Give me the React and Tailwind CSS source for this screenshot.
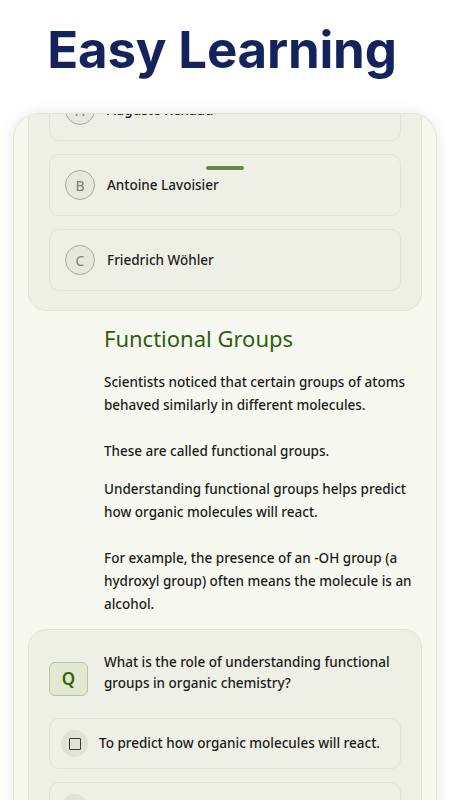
import React from "react";

const body = { fontFamily: '"Noto Sans", "Open Sans", sans-serif' };

function OptionRow({ letter, text }) {
  return (
    <div className="flex h-[62px] items-center rounded-[10px] border border-[#e2e3d6] bg-[#eff0e5] pl-[15px]">
      <div className="flex h-[30px] w-[30px] items-center justify-center rounded-full border-[1.5px] border-[#a9aa9f] bg-[#e7e8dd] text-[14px] text-[#7c7c74]">
        {letter}
      </div>
      <span className="ml-[12px] text-[13.5px] font-medium text-[#1c1c1a]">{text}</span>
    </div>
  );
}

function AnswerRow({ text }) {
  return (
    <div className="flex h-[51px] items-center rounded-[10px] border border-[#e2e3d6] bg-[#eff0e5] pl-[11px]">
      <div className="flex h-[27px] w-[27px] items-center justify-center rounded-full bg-[#e2e3d8]">
        <div className="h-[12px] w-[12px] rounded-[1px] border-[1.5px] border-[#3a3a38]" />
      </div>
      <span className="ml-[11px] text-[13.5px] font-medium text-[#1c1c1a]">{text}</span>
    </div>
  );
}

export default function App() {
  return (
    <div className="h-[800px] w-[450px] overflow-hidden bg-white" style={body}>
      <h1
        className="pr-[6px] pt-[24px] text-center text-[51px] font-bold leading-[52px] tracking-[-0.2px] text-[#14235b]"
        style={{ fontFamily: "Inter, sans-serif" }}
      >
        Easy Learning
      </h1>
      <div className="relative mx-[13px] mt-[37px] h-[720px] overflow-hidden rounded-t-[26px] border border-[#e3e9d1] bg-[#f7f8f0] shadow-[0_0_14px_rgba(0,0,0,0.10)]">
        <div className="mt-[-55px] px-[14px]">
          <div className="flex flex-col gap-[13px] rounded-[18px] border border-[#e1e3d4] bg-[#eff0e5] px-[20px] pb-[19px] pt-[19px]">
            <OptionRow letter="A" text="Auguste Renaud" />
            <OptionRow letter="B" text="Antoine Lavoisier" />
            <OptionRow letter="C" text="Friedrich Wöhler" />
          </div>

          <div className="ml-[76px] mr-[8px] mt-[12px]">
            <h2 className="text-[22px] leading-[30px] text-[#2f5e12]">Functional Groups</h2>
            <p className="mt-[18px] whitespace-pre-line text-[13.5px] font-medium leading-[23px] text-[#1c1c1a]">
              {"Scientists noticed that certain groups of atoms behaved similarly in different molecules.\n\nThese are called functional groups."}
            </p>
            <p className="mt-[15px] whitespace-pre-line text-[13.5px] font-medium leading-[23px] text-[#1c1c1a]">
              {"Understanding functional groups helps predict how organic molecules will react.\n\nFor example, the presence of an -OH group (a hydroxyl group) often means the molecule is an alcohol."}
            </p>
          </div>

          <div className="mt-[13px] rounded-[18px] border border-[#e1e3d4] bg-[#eff0e5] px-[20px] pt-[22px]">
            <div className="flex items-start">
              <div className="mt-[10px] flex h-[34px] w-[39px] shrink-0 items-center justify-center rounded-[6px] border border-[#b6c59e] bg-[#e2e8d2] text-[17px] font-semibold text-[#376213]">
                Q
              </div>
              <p className="ml-[16px] text-[13.5px] font-medium leading-[21px] text-[#1c1c1a]">
                What is the role of understanding functional groups in organic chemistry?
              </p>
            </div>
            <div className="mt-[22px] flex flex-col gap-[13px]">
              <AnswerRow text="To predict how organic molecules will react." />
              <AnswerRow text="To determine the color of compounds." />
            </div>
          </div>
        </div>
        <div className="absolute left-1/2 top-[52px] h-[4px] w-[38px] -translate-x-1/2 rounded-full bg-[#66864a]" />
      </div>
    </div>
  );
}
